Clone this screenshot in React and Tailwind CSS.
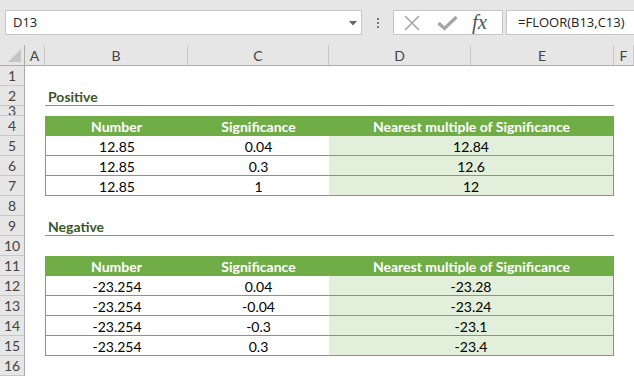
import React from 'react'

const cols = [
	{ key: 'A', w: 'w-[20px]' },
	{ key: 'B', w: 'w-[143px]' },
	{ key: 'C', w: 'w-[141px]' },
	{ key: 'D', w: 'w-[142px]' },
	{ key: 'E', w: 'w-[143px]' },
	{ key: 'F', w: 'w-[20px]' },
]

const positive = [
	['12.85', '0.04', '12.84'],
	['12.85', '0.3', '12.6'],
	['12.85', '1', '12'],
]

const negative = [
	['-23.254', '0.04', '-23.28'],
	['-23.254', '-0.04', '-23.24'],
	['-23.254', '-0.3', '-23.1'],
	['-23.254', '0.3', '-23.4'],
]

function RowHead({ n, h = 'h-[20px]' }) {
	return (
		<div
			className={`${h} flex w-[25px] shrink-0 items-center justify-center overflow-hidden border-b border-r border-b-[#c8c8c8] border-r-[#ababab] bg-[#e6e6e6] text-[14px] leading-none text-[#444]`}
		>
			{n}
		</div>
	)
}

function Row({ n, h = 'h-[20px]', children }) {
	return (
		<div className={`${h} flex`}>
			<RowHead n={n} h={h} />
			<div className="w-[20px] shrink-0" />
			<div className="flex w-[569px] shrink-0">{children}</div>
			<div className="w-[20px] shrink-0" />
		</div>
	)
}

function Title({ text }) {
	return (
		<div className="flex h-full w-full items-end border-b border-[#70ad47] pb-[1px] pl-[3px] text-[14px] font-bold leading-none text-[#3b5728]">
			{text}
		</div>
	)
}

function HeaderCells() {
	return (
		<div className="flex h-full w-full items-center bg-[#70ad47] pt-[1px] text-[14px] font-bold text-white">
			<div className="w-[143px] text-center">Number</div>
			<div className="w-[141px] text-center">Significance</div>
			<div className="w-[285px] text-center">Nearest multiple of Significance</div>
		</div>
	)
}

function DataCells({ row }) {
	return (
		<div className="flex h-full w-full border-x border-b border-[#70ad47] text-[14px] text-black">
			<div className="flex w-[142px] items-center justify-center pt-[1px]">{row[0]}</div>
			<div className="flex w-[141px] items-center justify-center pt-[1px]">{row[1]}</div>
			<div className="flex flex-1 items-center justify-center bg-[#e2efda] pt-[1px]">{row[2]}</div>
		</div>
	)
}

export default function App() {
	return (
		<div className="h-[376px] w-[634px] overflow-hidden bg-white font-['Lato',sans-serif]">
			{/* formula bar */}
			<div className="flex h-[45px] items-start bg-[#e6e6e6] pt-[10px]">
				<div className="relative ml-[5px] flex h-[25px] w-[357px] items-center border border-[#c6c6c6] bg-white pl-[7px] font-['Open_Sans',sans-serif] text-[13px] text-[#222]">
					D13
					<svg className="absolute left-[343px] top-[10px]" width="8" height="5" viewBox="0 0 8 5">
						<path d="M0 0h8L4 4.5z" fill="#666" />
					</svg>
				</div>
				<div className="flex h-[25px] w-[31px] flex-col items-center justify-center gap-[2px]">
					<span className="h-[2px] w-[2px] bg-[#777]" />
					<span className="h-[2px] w-[2px] bg-[#777]" />
					<span className="h-[2px] w-[2px] bg-[#777]" />
				</div>
				<div className="flex h-[25px] w-[110px] items-center border border-[#c6c6c6] bg-white">
					<svg className="ml-[9px]" width="18" height="16" viewBox="0 0 18 16">
						<path d="M2 1L16 15M16 1L2 15" stroke="#a6a6a6" strokeWidth="1.6" fill="none" />
					</svg>
					<svg className="ml-[16px]" width="21" height="16" viewBox="0 0 21 16">
						<path d="M1.5 8L7.5 13.5L19.5 2" stroke="#a6a6a6" strokeWidth="3.4" fill="none" />
					</svg>
					<span className="ml-[14px] font-['Liberation_Serif',serif] text-[21px] italic leading-none text-[#555]">
						fx
					</span>
				</div>
				<div className="ml-[3px] flex h-[25px] flex-1 items-center border border-r-0 border-[#c6c6c6] bg-white pl-[11px] font-['Open_Sans',sans-serif] text-[13px] text-[#222]">
					=FLOOR(B13,C13)
				</div>
			</div>

			{/* column headers */}
			<div className="flex h-[21px] border-b border-[#ababab] bg-[#e6e6e6]">
				<div className="relative w-[25px] shrink-0 border-r border-[#ababab]">
					<svg className="absolute bottom-[3px] right-[3px]" width="13" height="13" viewBox="0 0 13 13">
						<path d="M13 0V13H0z" fill="#c4c4c4" />
					</svg>
				</div>
				{cols.map(c => (
					<div
						key={c.key}
						className={`${c.w} flex shrink-0 items-center justify-center border-r border-[#c8c8c8] text-[14px] text-[#444]`}
					>
						{c.key}
					</div>
				))}
			</div>

			{/* sheet rows */}
			<Row n={1} />
			<Row n={2}>
				<Title text="Positive" />
			</Row>
			<Row n={3} h="h-[10px]" />
			<Row n={4}>
				<HeaderCells />
			</Row>
			{positive.map((r, i) => (
				<Row key={'p' + i} n={5 + i}>
					<DataCells row={r} />
				</Row>
			))}
			<Row n={8} />
			<Row n={9}>
				<Title text="Negative" />
			</Row>
			<Row n={10} />
			<Row n={11}>
				<HeaderCells />
			</Row>
			{negative.map((r, i) => (
				<Row key={'n' + i} n={12 + i}>
					<DataCells row={r} />
				</Row>
			))}
			<Row n={16} />
		</div>
	)
}
